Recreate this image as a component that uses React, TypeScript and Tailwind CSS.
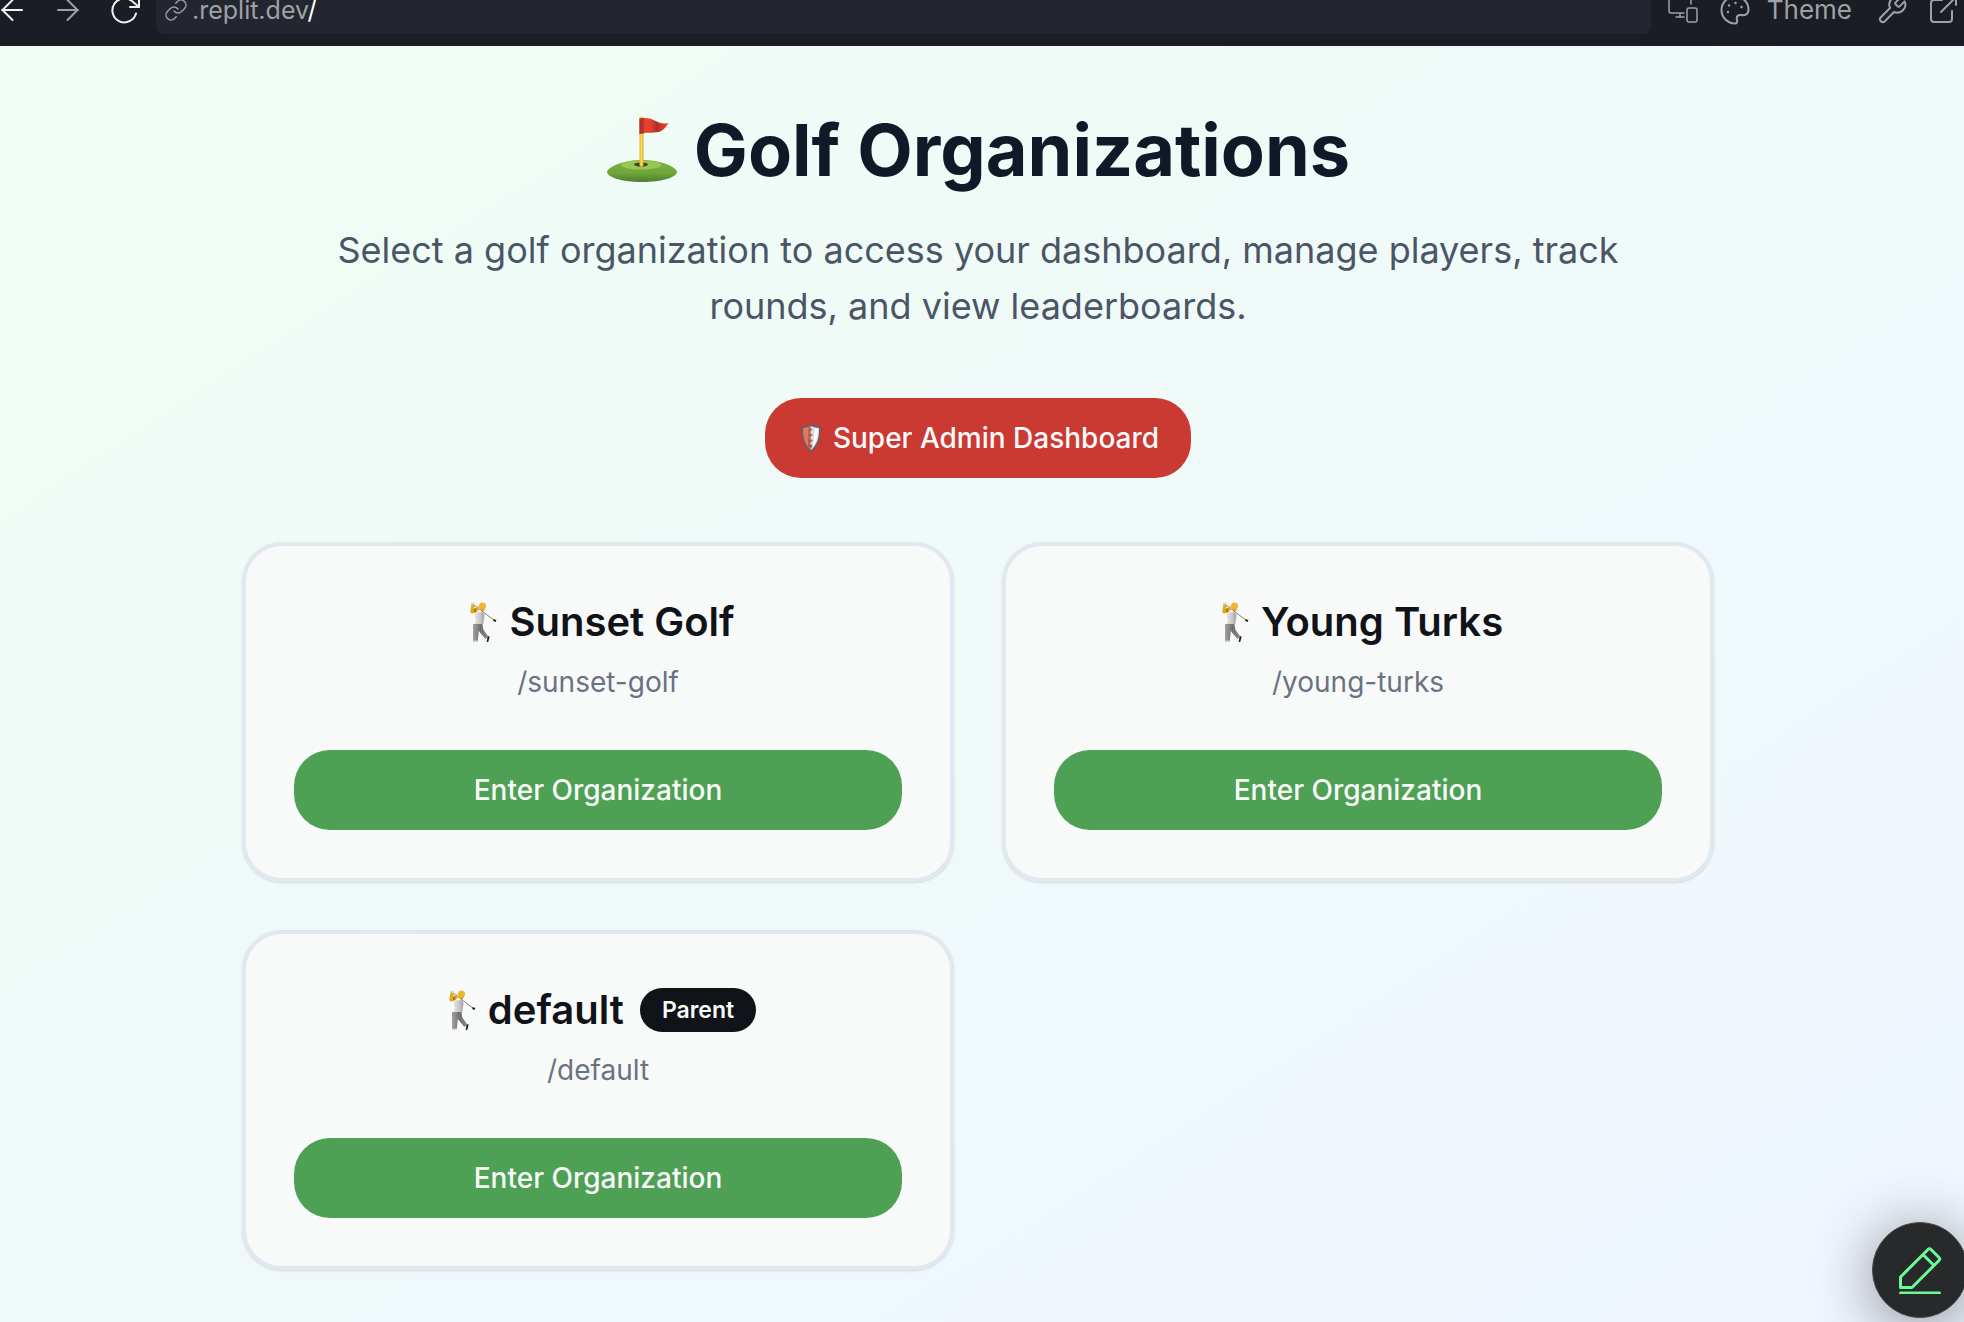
import React from "react";

type Organization = { name: string; slug: string; parent?: boolean };

const organizations: Organization[] = [
  { name: "Sunset Golf", slug: "/sunset-golf" },
  { name: "Young Turks", slug: "/young-turks" },
  { name: "default", slug: "/default", parent: true },
];

function FlagInHole() {
  return (
    <svg viewBox="0 0 72 72" className="size-[72px] shrink-0" aria-hidden="true">
      <defs>
        <linearGradient id="grass" x1="0" y1="0" x2="0" y2="1">
          <stop offset="0" stopColor="#7fb540" />
          <stop offset="0.6" stopColor="#6fa539" />
          <stop offset="1" stopColor="#4c7d33" />
        </linearGradient>
        <linearGradient id="flag" x1="0" y1="0" x2="1" y2="0">
          <stop offset="0" stopColor="#b8322a" />
          <stop offset="0.2" stopColor="#e8402f" />
          <stop offset="0.4" stopColor="#e23f30" />
          <stop offset="0.6" stopColor="#a9342b" />
          <stop offset="0.8" stopColor="#d8382d" />
          <stop offset="1" stopColor="#e8402f" />
        </linearGradient>
        <linearGradient id="pole" x1="0" y1="0" x2="1" y2="0">
          <stop offset="0" stopColor="#e8a92e" />
          <stop offset="0.5" stopColor="#fbdc55" />
          <stop offset="1" stopColor="#dfa02b" />
        </linearGradient>
      </defs>
      <path d="M1 58C1 54 15 46 36 46s35 8 35 12c0 5-15 10-35 10S1 63 1 58Z" fill="url(#grass)" />
      <ellipse cx="35" cy="51" rx="20" ry="4.5" fill="#97c657" />
      <ellipse cx="35" cy="50.5" rx="7" ry="2" fill="#4a3c1f" />
      <rect x="33.500" y="2.500" width="4" height="50" rx="1.500" fill="url(#pole)" />
      <path d="M33.500 4.500c6-1 10-.5 15 2 4 2 8 4 14 2.500-2 3-5 8-10 9-6 1.200-12 0-19 2Z" fill="url(#flag)" />
      <path d="M33.500 4.500h4.200v15.100l-4.200.4Z" fill="#a52f28" fillOpacity="0.600" />
    </svg>
  );
}

function Golfer() {
  return (
    <svg viewBox="0 0 40 40" className="size-10 shrink-0" aria-hidden="true">
      <defs>
        <linearGradient id="shirt" x1="0" y1="0" x2="1" y2="0">
          <stop offset="0" stopColor="#e4e4e4" />
          <stop offset="0.6" stopColor="#c6c6c6" />
          <stop offset="1" stopColor="#9f9f9f" />
        </linearGradient>
        <linearGradient id="trousers" x1="0" y1="0" x2="1" y2="0">
          <stop offset="0" stopColor="#a2a2a2" />
          <stop offset="0.5" stopColor="#6f6f6f" />
          <stop offset="1" stopColor="#8b8b8b" />
        </linearGradient>
      </defs>
      <path d="m11 1.500 22.500 17" stroke="#777" strokeWidth="0.900" />
      <path d="m32.500 17 2.800 1-.6 2-2.500-1Z" fill="#222" />
      <path d="M15 10.500c-1.500 2.500-1.500 5 0 7L13.500 22h8.800l.8-6c.8-2.500.4-4.500-1.600-6Z" fill="url(#shirt)" />
      <path d="m10.500 2 3.500 1.500-1 3.500c1.500-.7 3-1.500 3.800-3l1.700 1.500c-.5 2-1.800 3.800-3.500 5L11 11.500c-1.500-.2-1.900-1.500-1.500-3Z" fill="#e5a91c" />
      <path d="m13 7 2-1.200.3 3.400-2.300 1.300Z" fill="#a87813" />
      <circle cx="21.500" cy="4" r="3.500" fill="#edb52a" />
      <path d="M19 6.500c1.500 1.500 3.500 1.500 5-.5l-1 3-2.500.5Z" fill="#ce9319" />
      <path d="M10 .5 13.500 1l.5 2-3.500-.5Z" fill="#d6d6d6" />
      <path d="M12 22h9.500l.8 5.500 5 7-3 2.500-6.500-8-1 10H12Z" fill="url(#trousers)" />
      <path d="M12 38.500h4.600V40H12Z" fill="#cfcfcf" />
      <path d="m26.500 35 1.700-1.300.2 2-1.200 4.300h-1.500Z" fill="#1d1d1d" />
    </svg>
  );
}

function Shield() {
  return (
    <svg viewBox="0 0 28 28" className="size-7 shrink-0" aria-hidden="true">
      <path d="M14 0c3 1.500 6 2 9.500 2.200C24 13 22 22 14 28 6 22 4 13 4.500 2.200 8 2 11 1.500 14 0Z" fill="#626262" />
      <path d="M14 2c-2.500 1.200-5 1.700-8 1.900C5.800 13 7.500 20.500 14 26Z" fill="#e9745f" />
      <path d="M14 2c2.500 1.200 5 1.700 8 1.900C22.200 13 20.500 20.500 14 26Z" fill="#dedede" />
      <path d="M18 4c1.500.4 2.500.6 3 .6.100 7-1 13-5 18Z" fill="#fff" />
      <path d="m11.500 3 4 2.500-3.500 3 4 2.500-4 3 4 2.500-4 3 3.500 2-1.500 3-3-2Z" fill="#b5574a" />
      <path d="M11.500 3 14 5.500l-2 3 2.500 2.500-2.500 3 2.500 2.500-2.500 3 2 2" stroke="#8c8c8c" fill="none" />
    </svg>
  );
}

const stroke = {
  fill: "none",
  stroke: "currentColor",
  strokeWidth: 2,
  strokeLinecap: "round" as const,
  strokeLinejoin: "round" as const,
  "aria-hidden": true,
};

function BrowserBar() {
  return (
    <header className="flex h-[46px] flex-col justify-end overflow-hidden bg-[#1b1d25] text-[#9da2a6]">
      <div className="flex h-[72px] shrink-0 items-center">
        <button type="button" aria-label="Back" className="text-[#f0f1f3]">
          <svg viewBox="0 0 24 24" className="size-6" {...stroke}>
            <path d="M22 12H2M12.500 2 2.500 12l10 10" />
          </svg>
        </button>
        <button type="button" aria-label="Forward" className="ml-8">
          <svg viewBox="0 0 24 24" className="size-6" {...stroke}>
            <path d="M2 12h20M11.500 2l10 10-10 10" />
          </svg>
        </button>
        <button type="button" aria-label="Reload" className="ml-7 text-[#f0f1f3]">
          <svg viewBox="0 0 32 32" className="size-8" {...stroke}>
            <path d="M28 19.500A12 12 0 1 1 24.500 7.500L31 13M22 13h9V4" />
          </svg>
        </button>
        <label className="ml-4 flex h-12 min-w-0 flex-1 items-center gap-1 rounded-lg bg-[#24262f] pl-2">
          <svg viewBox="0 0 24 24" className="size-6 shrink-0" {...stroke} strokeWidth={1.5}>
            <path d="M10 13a5 5 0 0 0 7.540.54l3-3a5 5 0 0 0-7.070-7.070l-1.720 1.710" />
            <path d="M14 11a5 5 0 0 0-7.540-.54l-3 3a5 5 0 0 0 7.070 7.070l1.710-1.710" />
          </svg>
          <span className="text-[25px] leading-8">
            .replit.dev<span className="text-white">/</span>
          </span>
        </label>
        <button type="button" aria-label="Device size" className="ml-4">
          <svg viewBox="0 0 32 32" className="size-8" {...stroke} strokeWidth={1.5}>
            <path d="M24 10V5a2 2 0 0 0-2-2H4a2 2 0 0 0-2 2v12a2 2 0 0 0 2 2h13M13 19v4M9 23h8" />
            <rect x="20" y="14" width="10" height="14" rx="2" />
          </svg>
        </button>
        <button type="button" className="ml-5 flex items-center gap-4 text-[26px] leading-8">
          <svg viewBox="0 0 32 32" className="size-8" {...stroke}>
            <path d="M16 2.500a13.500 13.500 0 0 0 0 27c2 0 2.500-1.500 2-3.500-1-3.500 1-5.500 4-5 4 .8 7.500-.5 7.500-5.500C29.500 8 23.500 2.500 16 2.500Z" />
            <path d="M9 18h.010M10 11.500h.010M16.500 9h.010M22.500 13h.010" strokeWidth="2.500" />
          </svg>
          Theme
        </button>
        <button type="button" aria-label="Developer tools" className="ml-6">
          <svg viewBox="0 0 24 24" className="size-8" {...stroke} strokeWidth={1.5}>
            <path d="M14.700 6.300a1 1 0 0 0 0 1.400l1.600 1.600a1 1 0 0 0 1.400 0l3.770-3.770a6 6 0 0 1-7.940 7.940l-6.910 6.910a2.120 2.120 0 0 1-3-3l6.910-6.910a6 6 0 0 1 7.940-7.940Z" />
          </svg>
        </button>
        <button type="button" aria-label="Open in new tab" className="mr-1 ml-5">
          <svg viewBox="0 0 32 32" className="size-8" {...stroke}>
            <path d="M14 6H6a3 3 0 0 0-3 3v16a3 3 0 0 0 3 3h15a3 3 0 0 0 3-3v-8M20 3h8v8M28 3 13 18" />
          </svg>
        </button>
      </div>
    </header>
  );
}

function OrganizationCard({ name, slug, parent }: Organization) {
  return (
    <article className="rounded-[40px] border-4 border-[#e2e8f0] bg-[#f8faf9] p-12 text-center shadow-sm">
      <div className="flex h-14 items-center justify-center">
        <Golfer />
        <h2 className="ml-2 text-[40px] leading-[56px] font-semibold text-[#101318]">{name}</h2>
        {parent && (
          <span className="ml-4 flex h-11 items-center rounded-full bg-[#101318] px-[22px] text-[23px] font-semibold text-[#f8faf9]">
            Parent
          </span>
        )}
      </div>
      <p className="mt-3 mb-12 text-[28px] leading-10 text-gray-500">{slug}</p>
      <button
        type="button"
        className="h-20 w-full rounded-[36px] bg-[#4ea154] text-[28px] font-medium text-[#f8faf9]"
      >
        Enter Organization
      </button>
    </article>
  );
}

export default function App() {
  return (
    <div className="relative flex min-h-screen flex-col overflow-hidden font-['Inter',sans-serif]">
      <BrowserBar />
      <main className="flex-1 bg-linear-to-br from-[#f0fdf4] to-[#eff6ff] pt-16 pr-2 pb-[54px]">
        <div className="mx-auto max-w-[1536px] px-8">
          <div className="text-center">
            <h1 className="flex items-center justify-center gap-4 text-[72px] leading-20 font-bold text-[#111827]">
              <FlagInHole />
              Golf Organizations
            </h1>
            <p className="mx-auto mt-8 max-w-[1344px] text-[36px] leading-14 text-gray-600">
              Select a golf organization to access your dashboard, manage players, track rounds, and view
              leaderboards.
            </p>
            <button
              type="button"
              className="mt-16 inline-flex h-20 items-center gap-2 rounded-[36px] bg-[#ca3932] px-8 text-[28px] font-medium text-[#f8faf9]"
            >
              <Shield />
              Super Admin Dashboard
            </button>
          </div>
          <section className="mt-16 grid grid-cols-2 gap-12">
            {organizations.map((org) => (
              <OrganizationCard key={org.slug} {...org} />
            ))}
          </section>
        </div>
      </main>
      <button
        type="button"
        aria-label="Edit"
        className="absolute -right-1 bottom-1.5 flex size-24 items-center justify-center rounded-full border border-[#4a4b4e] bg-[#28292b] text-[#6bfb93] shadow-[0_8px_64px_rgba(0,0,0,0.45)]"
      >
        <svg viewBox="0 0 48 48" className="size-12" {...stroke} strokeWidth={3}>
          <path d="M4.500 41.500V31L32 3.500q1.500-1.500 3 0l8 8q1.500 1.500 0 3L16 41.500ZM27 8.500l10 10M4.500 47h39" />
        </svg>
      </button>
    </div>
  );
}
